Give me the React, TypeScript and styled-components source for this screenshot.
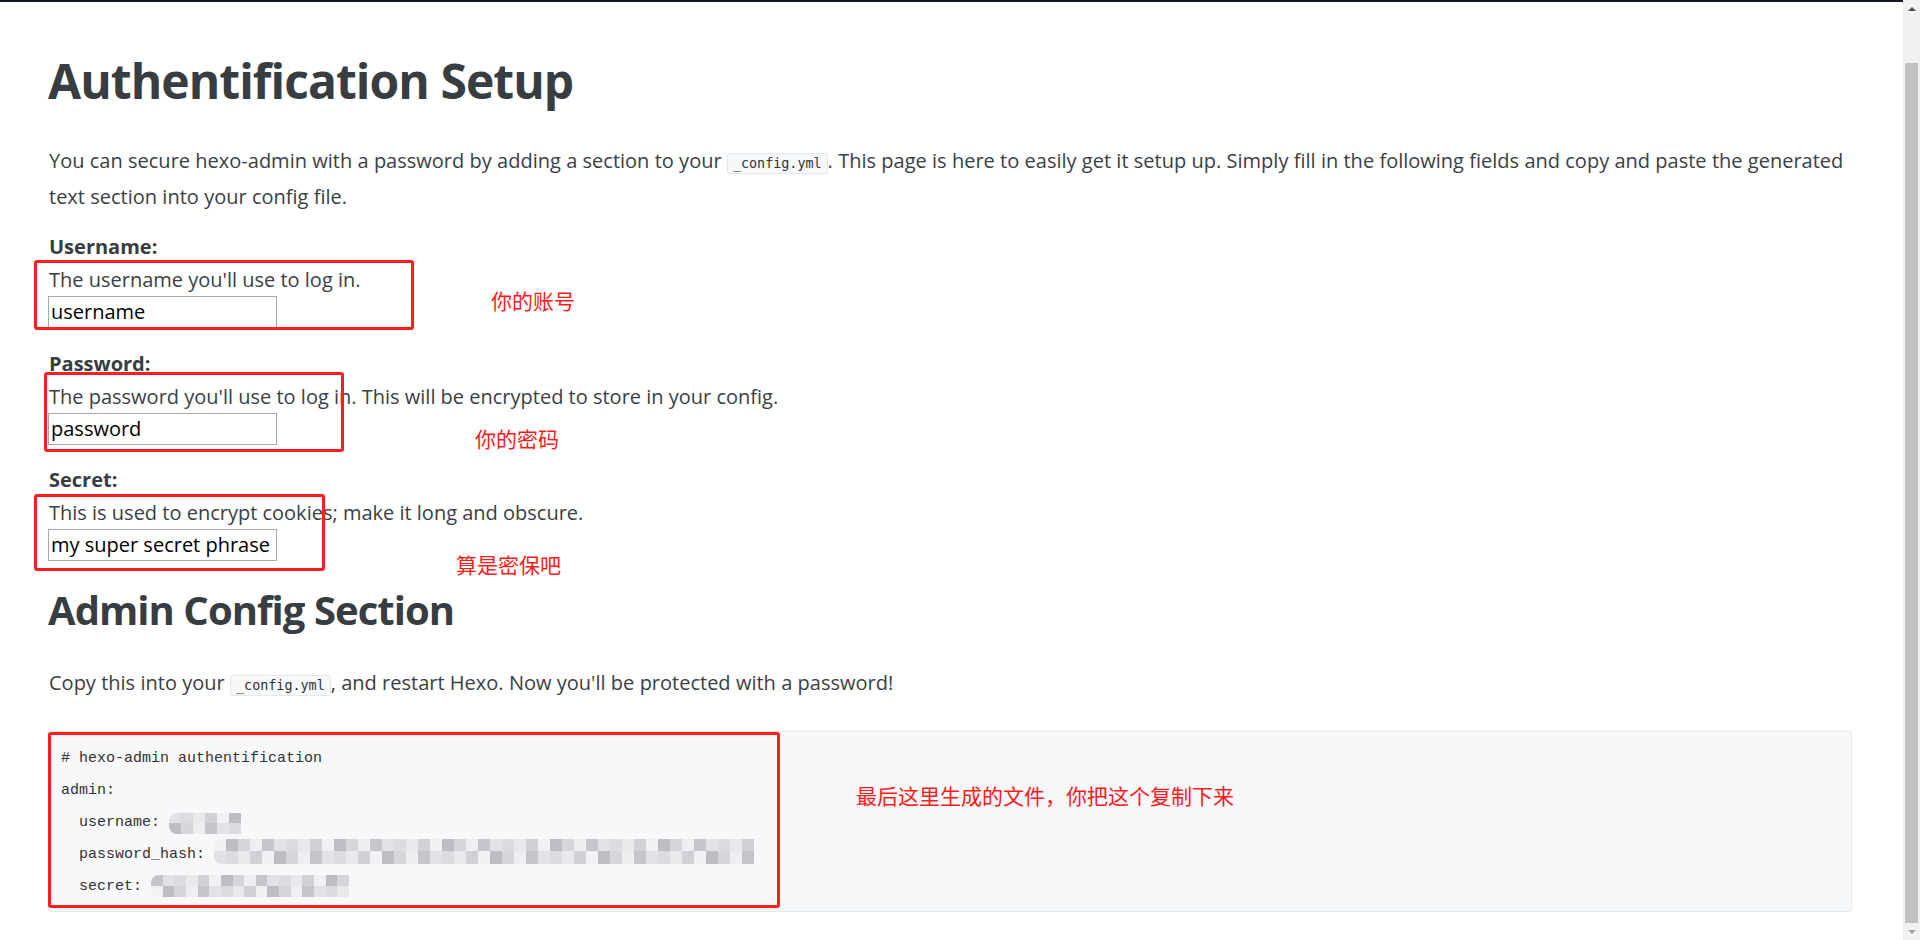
import React from "react";
import styled, { createGlobalStyle } from "styled-components";

const GlobalStyle = createGlobalStyle`
  html, body { margin: 0; padding: 0; background: #ffffff; overflow: hidden; }
  body { font-family: "Open Sans", "Noto Sans CJK SC", sans-serif; }
  * { box-sizing: border-box; }
`;

const Page = styled.div`
  display: flex;
  height: 100vh;
  width: 100vw;
`;

const Main = styled.main`
  flex: 1;
  position: relative;
  overflow: hidden;
  background: #fff;
`;

const TopBar = styled.div`
  height: 2px;
  background: #111822;
`;

const Content = styled.div`
  padding: 0 51px 0 48px;
  color: #3b4045;
`;

const H1 = styled.h1`
  margin: 53px 0 0;
  font-size: 48px;
  line-height: 1.1;
  font-weight: 700;
  letter-spacing: -0.95px;
  color: #373d41;
`;

const H2 = styled.h2`
  margin: 27px 0 0;
  font-size: 40px;
  line-height: 1.1;
  font-weight: 700;
  letter-spacing: -0.95px;
  color: #373d41;
`;

const Para = styled.p<{ $mt: number }>`
  margin: ${(p) => p.$mt}px 0 0;
  font-size: 20px;
  line-height: 33px;
  word-spacing: 0.1px;
  padding-left: 1px;
`;

const Chip = styled.code`
  font-family: "DejaVu Sans Mono", "Liberation Mono", monospace;
  font-size: 13.4px;
  padding: 2px 5px;
  border: 1px solid #e1e8ee;
  border-radius: 3px;
  background: #f6f8fa;
  color: #333;
  word-spacing: 0;
`;

const Field = styled.div<{ $mt: number }>`
  margin-top: ${(p) => p.$mt}px;
  padding-left: 1px;
`;

const Label = styled.div`
  font-size: 20px;
  font-weight: 700;
  line-height: 32px;
  color: #373d41;
`;

const Desc = styled.div`
  font-size: 20px;
  line-height: 33px;
`;

const TextInput = styled.input`
  display: block;
  width: 229px;
  height: 32px;
  margin: 0 0 0 -1px;
  padding: 0 2px;
  border: 1px solid #a9a9a9;
  font-family: "Open Sans", sans-serif;
  font-size: 20px;
  color: #000;
  background: #fff;
  outline: none;
`;

const CodeBlock = styled.pre`
  margin: 29px 0 0;
  padding: 11px 12px 8px;
  background: #f6f8fa;
  border: 1px solid #e2e8ed;
  border-radius: 3px;
  font-family: "Liberation Mono", monospace;
  font-size: 15px;
  line-height: 32px;
  color: #333;
`;

const CodeLine = styled.div<{ $indent?: boolean }>`
  height: 32px;
  white-space: pre;
  padding-left: ${(p) => (p.$indent ? "18px" : "0")};
`;

const MosaicBox = styled.span<{ $w: number; $h: number; $shift: number }>`
  display: inline-block;
  width: ${(p) => p.$w}px;
  height: ${(p) => p.$h}px;
  vertical-align: ${(p) => p.$shift}px;
  border-radius: 8px 0 0 8px;
  overflow: hidden;
`;

const MosaicGrid = styled.span`
  display: grid;
  grid-auto-flow: column;
  grid-template-rows: repeat(2, 1fr);
  width: 100%;
  height: 100%;
`;

const Cell = styled.span<{ $c: string }>`
  background: ${(p) => p.$c};
`;

const shades = ["#e9e9ec", "#dcdce0", "#d0d0d5", "#c5c5cb", "#eeeef0", "#e2e2e6", "#bdbdc3", "#f1f1f3", "#d6d6da"];

function Mosaic({ w, h, shift, seed }: { w: number; h: number; shift: number; seed: number }) {
  const cols = Math.round(w / 12);
  const cells: string[] = [];
  let s = seed;
  for (let i = 0; i < cols * 2; i++) {
    s = (s * 9301 + 49297) % 233280;
    cells.push(shades[s % shades.length]);
  }
  return (
    <MosaicBox $w={w} $h={h} $shift={shift}>
      <MosaicGrid>
        {cells.map((c, i) => (
          <Cell key={i} $c={c} />
        ))}
      </MosaicGrid>
    </MosaicBox>
  );
}

const RedBox = styled.div<{ $x: number; $y: number; $w: number; $h: number }>`
  position: absolute;
  left: ${(p) => p.$x}px;
  top: ${(p) => p.$y}px;
  width: ${(p) => p.$w}px;
  height: ${(p) => p.$h}px;
  border: 3px solid #fe1e1e;
  border-radius: 3px;
  pointer-events: none;
`;

const Note = styled.div<{ $x: number; $y: number }>`
  position: absolute;
  left: ${(p) => p.$x}px;
  top: ${(p) => p.$y}px;
  font-family: "Noto Sans CJK SC", sans-serif;
  font-size: 21px;
  line-height: 1;
  color: #ff1a1a;
  white-space: nowrap;
`;

const ScrollBar = styled.div`
  width: 17px;
  display: flex;
  flex-direction: column;
  background: #f1f1f1;
`;

const Arrow = styled.div<{ $down?: boolean; $color: string }>`
  height: 17px;
  display: flex;
  align-items: center;
  justify-content: center;
  &::after {
    content: "";
    width: 0;
    height: 0;
    border-left: 4px solid transparent;
    border-right: 4px solid transparent;
    ${(p) =>
      p.$down
        ? `border-top: 4px solid ${p.$color};`
        : `border-bottom: 4px solid ${p.$color};`}
  }
`;

const Track = styled.div`
  flex: 1;
  display: flex;
  flex-direction: column;
  padding: 46px 2px 0;
`;

const Thumb = styled.div`
  flex: 1;
  background: #c1c1c1;
`;

export default function App() {
  return (
    <Page>
      <GlobalStyle />
      <Main>
        <TopBar />
        <Content>
          <H1>Authentification Setup</H1>
          <Para $mt={36}>
            You can secure hexo-admin with a password by adding a section to your <Chip>_config.yml</Chip>. This
            page is here to easily get it setup up. Simply fill in the following fields and copy and paste the
            generated text section into your config file.
          </Para>
          <Field $mt={18}>
            <Label>Username:</Label>
            <Desc>The username you'll use to log in.</Desc>
            <TextInput defaultValue="username" />
          </Field>
          <Field $mt={20}>
            <Label>Password:</Label>
            <Desc>The password you'll use to log in. This will be encrypted to store in your config.</Desc>
            <TextInput defaultValue="password" />
          </Field>
          <Field $mt={19}>
            <Label>Secret:</Label>
            <Desc>This is used to encrypt cookies; make it long and obscure.</Desc>
            <TextInput defaultValue="my super secret phrase" />
          </Field>
          <H2>Admin Config Section</H2>
          <Para $mt={34}>
            Copy this into your <Chip>_config.yml</Chip>, and restart Hexo. Now you'll be protected with a password!
          </Para>
          <CodeBlock>
            <CodeLine># hexo-admin authentification</CodeLine>
            <CodeLine>admin:</CodeLine>
            <CodeLine $indent>
              {"username: "}
              <Mosaic w={72} h={21} shift={-8} seed={7} />
            </CodeLine>
            <CodeLine $indent>
              {"password_hash: "}
              <Mosaic w={540} h={25} shift={-6} seed={3} />
            </CodeLine>
            <CodeLine $indent>
              {"secret: "}
              <Mosaic w={198} h={22} shift={-7} seed={11} />
            </CodeLine>
          </CodeBlock>
        </Content>

        <RedBox $x={34} $y={260} $w={380} $h={70} />
        <RedBox $x={44} $y={372} $w={300} $h={80} />
        <RedBox $x={34} $y={494} $w={291} $h={77} />
        <RedBox $x={48} $y={732} $w={732} $h={176} />
        <Note $x={491} $y={290}>你的账号</Note>
        <Note $x={475} $y={428}>你的密码</Note>
        <Note $x={456} $y={554}>算是密保吧</Note>
        <Note $x={856} $y={785}>最后这里生成的文件，你把这个复制下来</Note>
      </Main>
      <ScrollBar>
        <Arrow $color="#505050" />
        <Track>
          <Thumb />
        </Track>
        <Arrow $down $color="#a3a3a3" />
      </ScrollBar>
    </Page>
  );
}
